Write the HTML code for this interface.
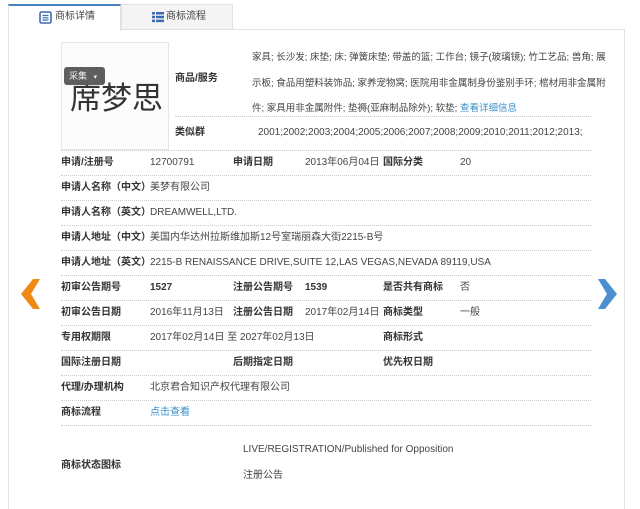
<!DOCTYPE html>
<html><head><meta charset="utf-8"><style>
*{margin:0;padding:0;box-sizing:border-box}
body{width:640px;height:504px;background:#fff;font-family:"Liberation Sans","Noto Sans CJK SC",sans-serif;font-size:10px;color:#444;position:relative;overflow:hidden}
.a{position:absolute;white-space:nowrap;line-height:14px}
.b{font-weight:bold;color:#333}
.sep{position:absolute;left:61px;width:530px;border-top:1px dotted #ccc;height:0}
.lk{color:#3a8fc8}
</style></head><body>
<div class="a" style="left:8px;top:29px;width:617px;height:480px;border:1px solid #e2e2e2;border-bottom:none"></div>
<div class="a" style="left:8px;top:4px;width:113px;height:27px;background:#fff;border:1px solid #e2e2e2;border-top:2px solid #4a7fc0;border-bottom:none"></div>
<div class="a" style="left:121px;top:4px;width:112px;height:26px;background:#f4f4f4;border:1px solid #e2e2e2"></div>
<svg class="a" style="left:39px;top:11px" width="13" height="13"><rect x="1" y="1" width="11" height="11" rx="1.5" fill="none" stroke="#3d6ab0" stroke-width="1.6"/><path d="M3.5 4.5h6M3.5 6.8h6M3.5 9h6" stroke="#3d6ab0" stroke-width="1.2"/></svg>
<div class="a" style="left:55px;top:10px;font-size:10px">商标详情</div>
<svg class="a" style="left:152px;top:11px" width="12" height="12"><path d="M0 1h3v2.5H0zM4 1h8v2.5H4zM0 4.8h3v2.5H0zM4 4.8h8v2.5H4zM0 8.6h3v2.5H0zM4 8.6h8v2.5H4z" fill="#3d6ab0"/></svg>
<div class="a" style="left:166px;top:10px;font-size:10px">商标流程</div>

<div class="a" style="left:61px;top:42px;width:108px;height:108px;border:1px solid #e6e6e6;background:#fcfcfd"></div>
<div class="a" style="left:70px;top:78px;font-size:31px;line-height:36px;color:#333;font-family:'Noto Sans CJK SC',sans-serif">席梦思</div>
<div class="a" style="left:64px;top:67px;width:41px;height:18px;background:#5e5e5e;border-radius:3px;color:#eee;font-size:9px;line-height:12px;padding:3px 0 0 5px">采集 <span style="font-size:7px;margin-left:4px">▾</span></div>

<div class="a b" style="left:175px;top:72px">商品/服务</div>
<div class="a" style="left:252px;top:45px;line-height:25.5px;font-size:9.5px">家具; 长沙发; 床垫; 床; 弹簧床垫; 带盖的篮; 工作台; 镜子(玻璃镜); 竹工艺品; 兽角; 展<br>示板; 食品用塑料装饰品; 家养宠物窝; 医院用非金属制身份鉴别手环; 棺材用非金属附<br>件; 家具用非金属附件; 垫褥(亚麻制品除外); 软垫; <span class="lk">查看详细信息</span></div>
<div class="sep" style="left:175px;width:416px;top:116px"></div>
<div class="a b" style="left:175px;top:126px">类似群</div>
<div class="a" style="left:258px;top:126px;font-size:10px">2001;2002;2003;2004;2005;2006;2007;2008;2009;2010;2011;2012;2013;</div>
<div class="sep" style="top:150px"></div>

<div class="a b" style="left:61px;top:156px">申请/注册号</div><div class="a" style="left:150px;top:156px">12700791</div>
<div class="a b" style="left:233px;top:156px">申请日期</div><div class="a" style="left:305px;top:156px">2013年06月04日</div>
<div class="a b" style="left:383px;top:156px">国际分类</div><div class="a" style="left:460px;top:156px">20</div>
<div class="sep" style="top:175px"></div>
<div class="a b" style="left:61px;top:181px">申请人名称（中文）</div><div class="a" style="left:150px;top:181px">美梦有限公司</div>
<div class="sep" style="top:200px"></div>
<div class="a b" style="left:61px;top:206px">申请人名称（英文）</div><div class="a" style="left:150px;top:206px">DREAMWELL,LTD.</div>
<div class="sep" style="top:225px"></div>
<div class="a b" style="left:61px;top:231px">申请人地址（中文）</div><div class="a" style="left:150px;top:231px">美国内华达州拉斯维加斯12号室瑞丽森大街2215-B号</div>
<div class="sep" style="top:250px"></div>
<div class="a b" style="left:61px;top:256px">申请人地址（英文）</div><div class="a" style="left:150px;top:256px">2215-B RENAISSANCE DRIVE,SUITE 12,LAS VEGAS,NEVADA 89119,USA</div>
<div class="sep" style="top:275px"></div>
<div class="a b" style="left:61px;top:281px">初审公告期号</div><div class="a b" style="left:150px;top:281px">1527</div>
<div class="a b" style="left:233px;top:281px">注册公告期号</div><div class="a b" style="left:305px;top:281px">1539</div>
<div class="a b" style="left:383px;top:281px">是否共有商标</div><div class="a" style="left:460px;top:281px">否</div>
<div class="sep" style="top:300px"></div>
<div class="a b" style="left:61px;top:306px">初审公告日期</div><div class="a" style="left:150px;top:306px">2016年11月13日</div>
<div class="a b" style="left:233px;top:306px">注册公告日期</div><div class="a" style="left:305px;top:306px">2017年02月14日</div>
<div class="a b" style="left:383px;top:306px">商标类型</div><div class="a" style="left:460px;top:306px">一般</div>
<div class="sep" style="top:325px"></div>
<div class="a b" style="left:61px;top:331px">专用权期限</div><div class="a" style="left:150px;top:331px">2017年02月14日 至 2027年02月13日</div>
<div class="a b" style="left:383px;top:331px">商标形式</div>
<div class="sep" style="top:350px"></div>
<div class="a b" style="left:61px;top:356px">国际注册日期</div>
<div class="a b" style="left:233px;top:356px">后期指定日期</div>
<div class="a b" style="left:383px;top:356px">优先权日期</div>
<div class="sep" style="top:375px"></div>
<div class="a b" style="left:61px;top:381px">代理/办理机构</div><div class="a" style="left:150px;top:381px">北京君合知识产权代理有限公司</div>
<div class="sep" style="top:400px"></div>
<div class="a b" style="left:61px;top:406px">商标流程</div><div class="a lk" style="left:150px;top:406px">点击查看</div>
<div class="sep" style="top:425px"></div>
<div class="a b" style="left:61px;top:459px">商标状态图标</div>
<div class="a" style="left:243px;top:443px">LIVE/REGISTRATION/Published for Opposition</div>
<div class="a" style="left:243px;top:469px">注册公告</div>

<svg class="a" style="left:18px;top:278px" width="24" height="34"><path d="M15 1h7L13 16l9 15h-7L3 16z" fill="#f08a14"/></svg>
<svg class="a" style="left:597px;top:278px" width="24" height="34"><path d="M8 1H1l9 15-9 15h7L20 16z" fill="#4b8fd0"/></svg>
</body></html>
